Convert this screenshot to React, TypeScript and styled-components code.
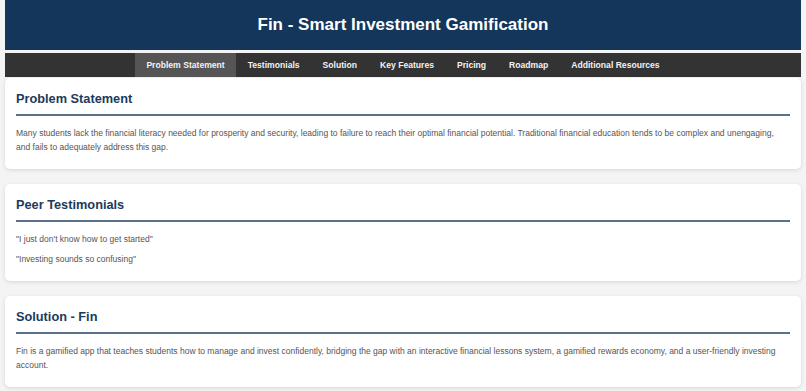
import styled, { createGlobalStyle } from "styled-components";

const GlobalStyle = createGlobalStyle`
  html, body {
    margin: 0;
    padding: 0;
    background: #f4f4f4;
  }
  body {
    padding: 0 5px;
    font-family: "Liberation Sans", Arial, sans-serif;
    overflow: hidden;
  }
`;

const Header = styled.header`
  background: #14365b;
  height: 50px;
  display: flex;
  align-items: center;
  justify-content: center;
`;

const Title = styled.h1`
  margin: 0;
  color: #fff;
  font-size: 17px;
  font-weight: 700;
`;

const Nav = styled.nav`
  margin-top: 3px;
  background: #333;
  height: 24px;
  display: flex;
  justify-content: center;
`;

const NavItem = styled.a<{ $active?: boolean }>`
  display: flex;
  align-items: center;
  padding: 0 11.5px;
  color: #f2f2f2;
  font-size: 8.6px;
  font-weight: 700;
  text-decoration: none;
  background: ${(p) => (p.$active ? "#555" : "transparent")};
`;

const Main = styled.main`
  padding-top: 1px;
`;

const Card = styled.section`
  background: #fff;
  border-radius: 5px;
  box-shadow: 0 1px 4px rgba(0, 0, 0, 0.12);
  padding: 13px 11px 9px;
  margin-bottom: 15px;
`;

const Heading = styled.h2`
  margin: 0 0 10px;
  padding-bottom: 7px;
  border-bottom: 2px solid #5a7189;
  color: #1d3a5c;
  font-size: 12.75px;
  line-height: 16px;
  font-weight: 700;
`;

const Text = styled.p`
  margin: 0 0 6px;
  color: #555;
  font-size: 8.5px;
  line-height: 14px;
`;

const navItems = [
  "Problem Statement",
  "Testimonials",
  "Solution",
  "Key Features",
  "Pricing",
  "Roadmap",
  "Additional Resources",
];

export default function App() {
  return (
    <>
      <GlobalStyle />
      <Header>
        <Title>Fin - Smart Investment Gamification</Title>
      </Header>
      <Nav>
        {navItems.map((item, i) => (
          <NavItem key={item} href="#" $active={i === 0}>
            {item}
          </NavItem>
        ))}
      </Nav>
      <Main>
        <Card>
          <Heading>Problem Statement</Heading>
          <Text>
            Many students lack the financial literacy needed for prosperity and
            security, leading to failure to reach their optimal financial
            potential. Traditional financial education tends to be complex and
            unengaging, and fails to adequately address this gap.
          </Text>
        </Card>
        <Card>
          <Heading>Peer Testimonials</Heading>
          <Text>"I just don't know how to get started"</Text>
          <Text>"Investing sounds so confusing"</Text>
        </Card>
        <Card>
          <Heading>Solution - Fin</Heading>
          <Text>
            Fin is a gamified app that teaches students how to manage and invest
            confidently, bridging the gap with an interactive financial lessons
            system, a gamified rewards economy, and a user-friendly investing
            account.
          </Text>
        </Card>
      </Main>
    </>
  );
}
